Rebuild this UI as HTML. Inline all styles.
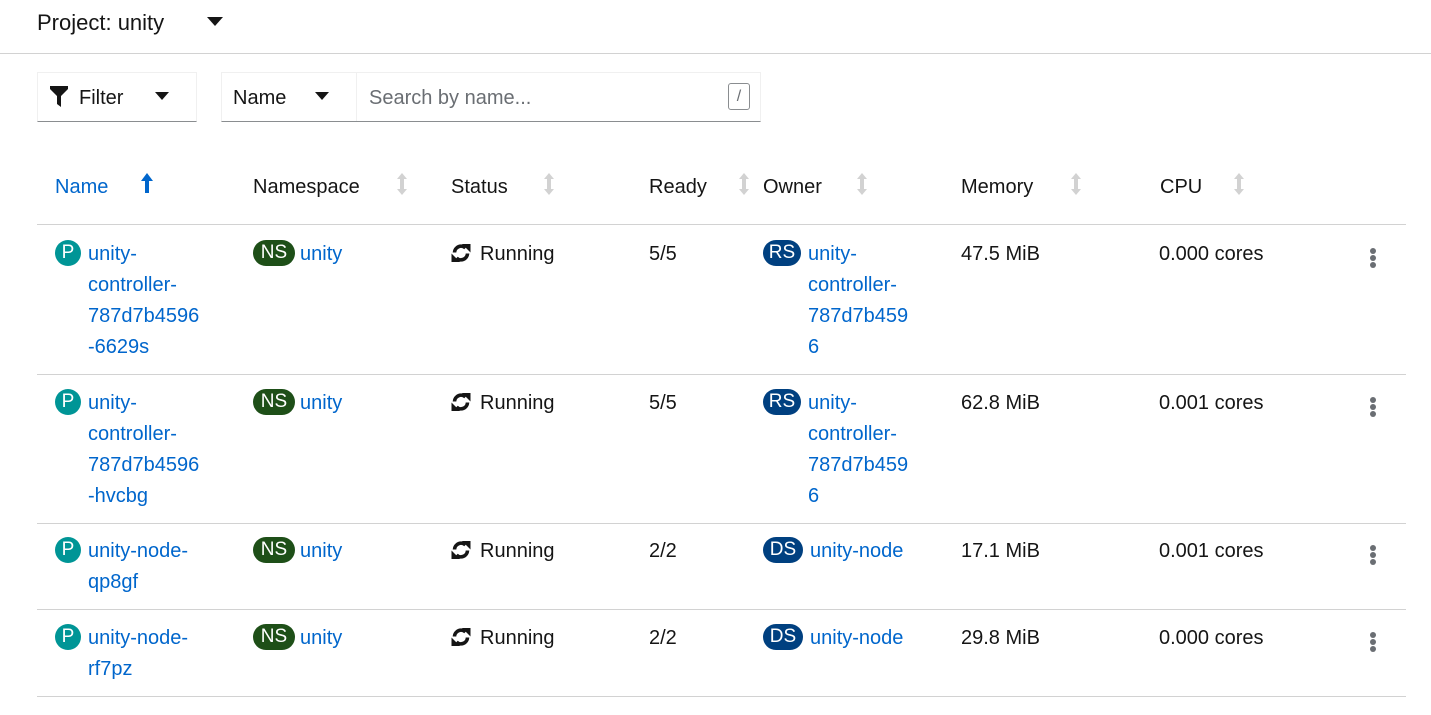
<!DOCTYPE html>
<html><head><meta charset="utf-8"><style>
*{margin:0;padding:0;box-sizing:border-box}
body{width:1431px;height:715px;background:#fff;font-family:"Liberation Sans",sans-serif;color:#151515;font-size:20px;position:relative;overflow:hidden}
.a{position:absolute;white-space:nowrap;line-height:31px;transform:translateY(2px)}
.l{color:#0066cc}
.b{position:absolute;height:26px;border-radius:13px;color:#fff;font-size:19px;line-height:26px;text-align:center}
.P{background:#009596;width:26px}
.NS{background:#1e4f18;width:42px}
.RS{background:#004080;width:38px}
.hr{position:absolute;left:37px;width:1369px;height:1px;background:#d2d2d2}
.th{position:absolute;top:170px;line-height:30px;font-weight:normal}
.si{position:absolute;top:173px}
.k{position:absolute;width:6px}
.k i{display:block;width:6px;height:6px;border-radius:3px;background:#6a6e73;margin-bottom:1px}
</style></head><body>
<div class="a" style="left:37px;top:5px;font-size:22px;line-height:32px">Project: unity</div>
<svg style="position:absolute;left:207px;top:17px" width="16" height="10"><path d="M0 0H16L8 9Z" fill="#151515"/></svg>
<div style="position:absolute;left:0;top:53px;width:1431px;height:1px;background:#d2d2d2"></div>

<div style="position:absolute;left:37px;top:72px;width:160px;height:50px;border:1px solid #f0f0f0;border-bottom:1px solid #8a8d90"></div>
<svg style="position:absolute;left:50px;top:86px" width="18" height="21" viewBox="0 0 18 21"><path d="M0 0H18V3L11 10V21L7 18V10L0 3Z" fill="#151515"/></svg>
<div class="a" style="left:79px;top:81px">Filter</div>
<svg style="position:absolute;left:155px;top:92px" width="14" height="8"><path d="M0 0H14L7 8Z" fill="#151515"/></svg>

<div style="position:absolute;left:221px;top:72px;width:540px;height:50px;border:1px solid #f0f0f0;border-bottom:1px solid #8a8d90"></div>
<div style="position:absolute;left:356px;top:72px;width:1px;height:49px;background:#f0f0f0"></div>
<div class="a" style="left:233px;top:81px">Name</div>
<svg style="position:absolute;left:315px;top:92px" width="14" height="8"><path d="M0 0H14L7 8Z" fill="#151515"/></svg>
<div class="a" style="left:369px;top:81px;color:#6a6e73">Search by name...</div>
<div style="position:absolute;left:728px;top:83px;width:22px;height:27px;border:1px solid #8a8d90;border-radius:3px;color:#6a6e73;font-size:16px;text-align:center;line-height:25px">/</div>

<div class="th a" style="left:55px;color:#0066cc">Name</div>
<svg class="si" style="left:141px" width="12" height="22" viewBox="0 0 12 22"><path d="M6 0L12 8H8V20H4V8H0Z" fill="#0066cc"/></svg>
<div class="th a" style="left:253px">Namespace</div>
<div class="th a" style="left:451px">Status</div>
<div class="th a" style="left:649px">Ready</div>
<div class="th a" style="left:763px">Owner</div>
<div class="th a" style="left:961px">Memory</div>
<div class="th a" style="left:1160px">CPU</div>
<svg class="si" style="left:396px" width="12" height="22"><path d="M6 0L11 6H8V16H11L6 22L1 16H4V6H1Z" fill="#d2d2d2"/></svg>
<svg class="si" style="left:543px" width="12" height="22"><path d="M6 0L11 6H8V16H11L6 22L1 16H4V6H1Z" fill="#d2d2d2"/></svg>
<svg class="si" style="left:738px" width="12" height="22"><path d="M6 0L11 6H8V16H11L6 22L1 16H4V6H1Z" fill="#d2d2d2"/></svg>
<svg class="si" style="left:856px" width="12" height="22"><path d="M6 0L11 6H8V16H11L6 22L1 16H4V6H1Z" fill="#d2d2d2"/></svg>
<svg class="si" style="left:1070px" width="12" height="22"><path d="M6 0L11 6H8V16H11L6 22L1 16H4V6H1Z" fill="#d2d2d2"/></svg>
<svg class="si" style="left:1233px" width="12" height="22"><path d="M6 0L11 6H8V16H11L6 22L1 16H4V6H1Z" fill="#d2d2d2"/></svg>

<div class="hr" style="top:224px"></div>
<div class="hr" style="top:374px"></div>
<div class="hr" style="top:523px"></div>
<div class="hr" style="top:609px"></div>
<div class="hr" style="top:696px"></div>

<!-- row 1 -->
<div class="b P" style="left:55px;top:240px">P</div>
<div class="a l" style="left:88px;top:237px">unity-<br>controller-<br>787d7b4596<br>-6629s</div>
<div class="b NS" style="left:253px;top:240px">NS</div><div class="a l" style="left:300px;top:237px">unity</div>
<svg style="position:absolute;left:451px;top:243px" width="20" height="20" viewBox="0 0 20 20"><path d="M3.5 9.5A6.5 6.5 0 0 1 14.5 5" fill="none" stroke="#151515" stroke-width="3.6"/><path d="M11 1H19.5V9.5Z" fill="#151515"/><path d="M16.5 10.5A6.5 6.5 0 0 1 5.5 15" fill="none" stroke="#151515" stroke-width="3.6"/><path d="M9 19H0.5V10.5Z" fill="#151515"/></svg>
<div class="a" style="left:480px;top:237px">Running</div>
<div class="a" style="left:649px;top:237px">5/5</div>
<div class="b RS" style="left:763px;top:240px">RS</div><div class="a l" style="left:808px;top:237px">unity-<br>controller-<br>787d7b459<br>6</div>
<div class="a" style="left:961px;top:237px">47.5 MiB</div>
<div class="a" style="left:1159px;top:237px">0.000 cores</div>
<div class="k" style="left:1370px;top:248px"><i></i><i></i><i></i></div>

<!-- row 2 -->
<div class="b P" style="left:55px;top:389px">P</div>
<div class="a l" style="left:88px;top:386px">unity-<br>controller-<br>787d7b4596<br>-hvcbg</div>
<div class="b NS" style="left:253px;top:389px">NS</div><div class="a l" style="left:300px;top:386px">unity</div>
<svg style="position:absolute;left:451px;top:392px" width="20" height="20" viewBox="0 0 20 20"><path d="M3.5 9.5A6.5 6.5 0 0 1 14.5 5" fill="none" stroke="#151515" stroke-width="3.6"/><path d="M11 1H19.5V9.5Z" fill="#151515"/><path d="M16.5 10.5A6.5 6.5 0 0 1 5.5 15" fill="none" stroke="#151515" stroke-width="3.6"/><path d="M9 19H0.5V10.5Z" fill="#151515"/></svg>
<div class="a" style="left:480px;top:386px">Running</div>
<div class="a" style="left:649px;top:386px">5/5</div>
<div class="b RS" style="left:763px;top:389px">RS</div><div class="a l" style="left:808px;top:386px">unity-<br>controller-<br>787d7b459<br>6</div>
<div class="a" style="left:961px;top:386px">62.8 MiB</div>
<div class="a" style="left:1159px;top:386px">0.001 cores</div>
<div class="k" style="left:1370px;top:397px"><i></i><i></i><i></i></div>

<!-- row 3 -->
<div class="b P" style="left:55px;top:537px">P</div>
<div class="a l" style="left:88px;top:534px">unity-node-<br>qp8gf</div>
<div class="b NS" style="left:253px;top:537px">NS</div><div class="a l" style="left:300px;top:534px">unity</div>
<svg style="position:absolute;left:451px;top:540px" width="20" height="20" viewBox="0 0 20 20"><path d="M3.5 9.5A6.5 6.5 0 0 1 14.5 5" fill="none" stroke="#151515" stroke-width="3.6"/><path d="M11 1H19.5V9.5Z" fill="#151515"/><path d="M16.5 10.5A6.5 6.5 0 0 1 5.5 15" fill="none" stroke="#151515" stroke-width="3.6"/><path d="M9 19H0.5V10.5Z" fill="#151515"/></svg>
<div class="a" style="left:480px;top:534px">Running</div>
<div class="a" style="left:649px;top:534px">2/2</div>
<div class="b RS" style="left:763px;top:537px;width:40px">DS</div><div class="a l" style="left:810px;top:534px">unity-node</div>
<div class="a" style="left:961px;top:534px">17.1 MiB</div>
<div class="a" style="left:1159px;top:534px">0.001 cores</div>
<div class="k" style="left:1370px;top:545px"><i></i><i></i><i></i></div>

<!-- row 4 -->
<div class="b P" style="left:55px;top:624px">P</div>
<div class="a l" style="left:88px;top:621px">unity-node-<br>rf7pz</div>
<div class="b NS" style="left:253px;top:624px">NS</div><div class="a l" style="left:300px;top:621px">unity</div>
<svg style="position:absolute;left:451px;top:627px" width="20" height="20" viewBox="0 0 20 20"><path d="M3.5 9.5A6.5 6.5 0 0 1 14.5 5" fill="none" stroke="#151515" stroke-width="3.6"/><path d="M11 1H19.5V9.5Z" fill="#151515"/><path d="M16.5 10.5A6.5 6.5 0 0 1 5.5 15" fill="none" stroke="#151515" stroke-width="3.6"/><path d="M9 19H0.5V10.5Z" fill="#151515"/></svg>
<div class="a" style="left:480px;top:621px">Running</div>
<div class="a" style="left:649px;top:621px">2/2</div>
<div class="b RS" style="left:763px;top:624px;width:40px">DS</div><div class="a l" style="left:810px;top:621px">unity-node</div>
<div class="a" style="left:961px;top:621px">29.8 MiB</div>
<div class="a" style="left:1159px;top:621px">0.000 cores</div>
<div class="k" style="left:1370px;top:632px"><i></i><i></i><i></i></div>
</body></html>
